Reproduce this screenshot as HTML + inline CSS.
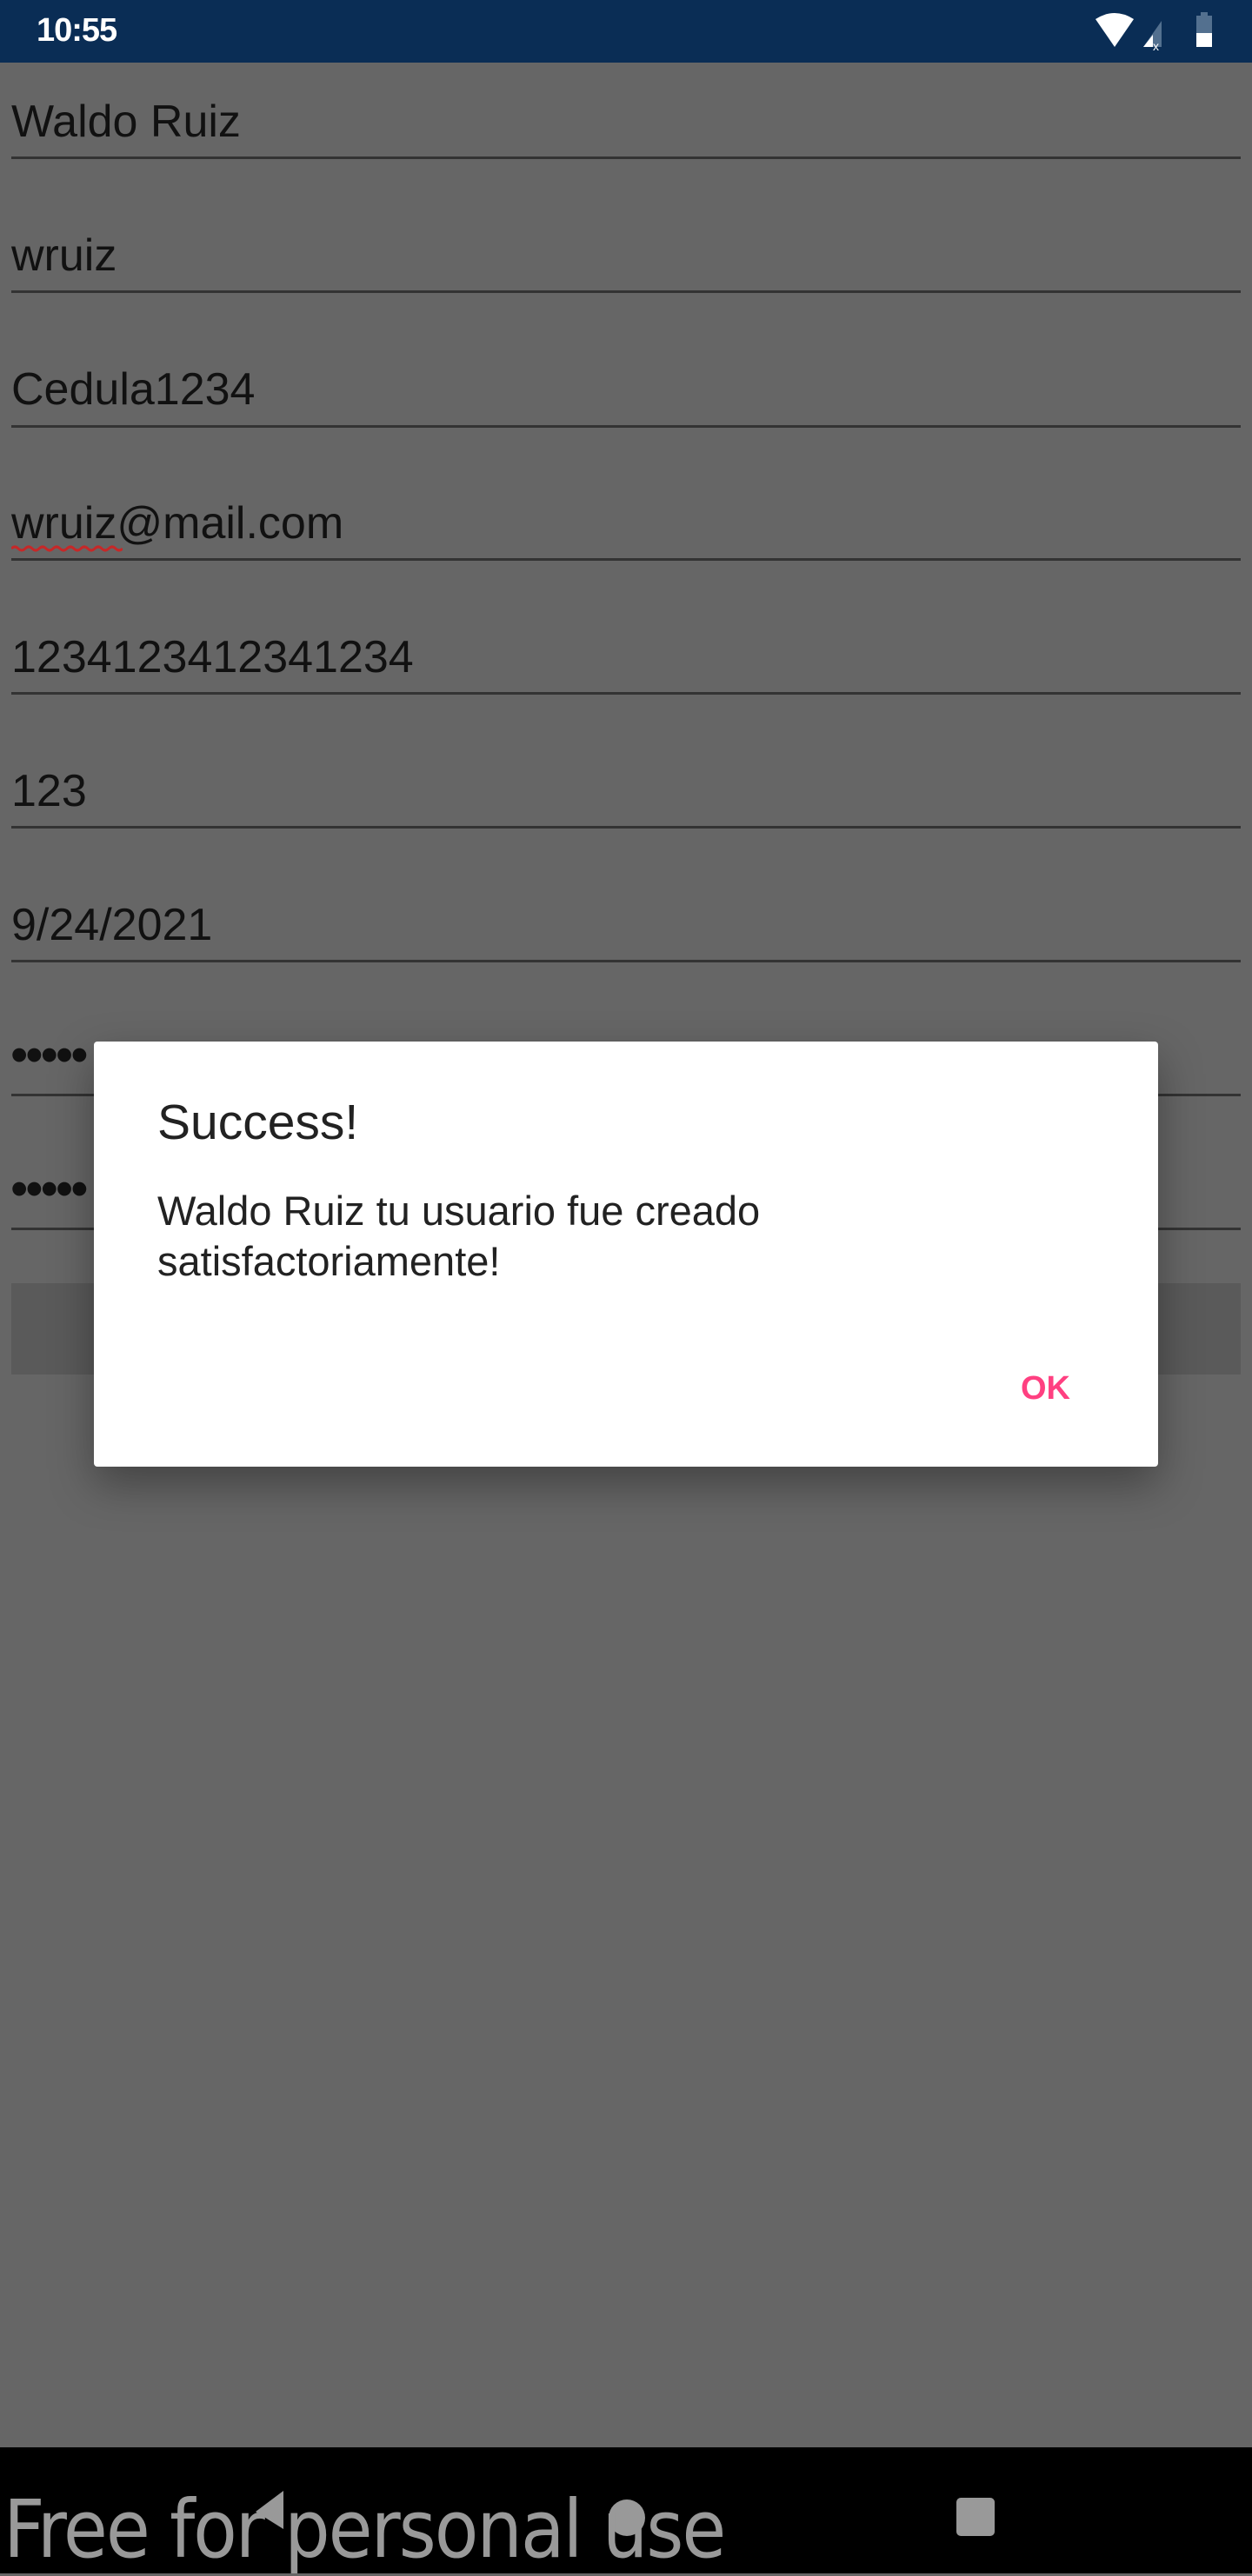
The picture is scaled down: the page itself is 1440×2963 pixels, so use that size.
<!DOCTYPE html>
<html><head><meta charset="utf-8"><style>
*{margin:0;padding:0;box-sizing:border-box}
body{width:1440px;height:2960px;background:#666;position:relative;overflow:hidden;font-family:"Liberation Sans",sans-serif}
.sb{position:absolute;left:0;top:0;width:1440px;height:72px;background:#0a2d55;color:#fff}
.time{position:absolute;left:42px;top:14px;font-size:38px;font-weight:bold;letter-spacing:-1px}
.f{position:absolute;left:13px;font-size:52px;color:#111}
.ln{position:absolute;left:13px;width:1414px;height:3px;background:#333}
.dots{position:absolute;left:12px;font-size:58px;color:#111;letter-spacing:-3px}
.btn{position:absolute;left:13px;top:1476px;width:1414px;height:105px;background:#5a5a5a}
.dlg{position:absolute;left:108px;top:1198px;width:1224px;height:489px;background:#fff;border-radius:4px;box-shadow:0 20px 50px rgba(0,0,0,.35)}
.t{position:absolute;left:73px;top:60px;font-size:57px;color:#222}
.b{position:absolute;left:73px;top:166px;font-size:47px;line-height:58px;color:#222;width:1100px}
.ok{position:absolute;left:1066px;top:378px;font-size:38px;font-weight:bold;color:#ff4081}
.nav{position:absolute;left:0;top:2815px;width:1440px;height:145px;background:#000}
.wm{position:absolute;left:4px;top:2856px;font-size:92px;color:#999;font-family:"DejaVu Sans Condensed","DejaVu Sans",sans-serif;letter-spacing:-2px;white-space:nowrap}
</style></head><body>
<div class="sb"><div class="time">10:55</div>
<svg style="position:absolute;left:1260px;top:14px" width="160" height="46" viewBox="0 0 160 46">
<path d="M0 8 Q22 -6 44 8 L22 40 Z" fill="#fff"/>
<path d="M55 40 L76 10 L76 40 Z" fill="#53708f"/><path d="M55 40 L66 26 L66 40 Z" fill="#fff"/>
<text x="66" y="44" font-size="14" fill="#fff" font-family="Liberation Sans">x</text>
<rect x="116" y="4" width="18" height="36" fill="#53708f"/><rect x="121" y="0" width="8" height="4" fill="#53708f"/><rect x="116" y="24" width="18" height="16" fill="#fff"/>
</svg></div>

<div class="f" style="top:110px">Waldo Ruiz</div><div class="ln" style="top:180px"></div>
<div class="f" style="top:264px">wruiz</div><div class="ln" style="top:334px"></div>
<div class="f" style="top:418px">Cedula1234</div><div class="ln" style="top:489px"></div>
<div class="f" style="top:572px">wruiz@mail.com</div>
<svg style="position:absolute;left:13px;top:627px" width="128" height="8"><path d="M0 4 Q4 0 8 4 T16 4 T24 4 T32 4 T40 4 T48 4 T56 4 T64 4 T72 4 T80 4 T88 4 T96 4 T104 4 T112 4 T120 4 T128 4" stroke="#c62828" stroke-width="3" fill="none"/></svg>
<div class="ln" style="top:642px"></div>
<div class="f" style="top:726px">1234123412341234</div><div class="ln" style="top:796px"></div>
<div class="f" style="top:880px">123</div><div class="ln" style="top:950px"></div>
<div class="f" style="top:1034px">9/24/2021</div><div class="ln" style="top:1104px"></div>
<div class="dots" style="top:1180px">•••••</div><div class="ln" style="top:1258px"></div>
<div class="dots" style="top:1334px">•••••</div><div class="ln" style="top:1412px"></div>
<div class="btn"></div>

<div class="dlg"><div class="t">Success!</div>
<div class="b">Waldo Ruiz tu usuario fue creado<br>satisfactoriamente!</div>
<div class="ok">OK</div></div>

<div class="nav">
<svg style="position:absolute;left:290px;top:50px" width="40" height="46"><path d="M36 0 L36 44 L4 24 Z" fill="#999"/></svg>
<div style="position:absolute;left:700px;top:60px;width:42px;height:42px;border-radius:50%;background:#999"></div>
<div style="position:absolute;left:1100px;top:58px;width:44px;height:44px;border-radius:5px;background:#999"></div>
</div>
<div class="wm">Free for personal use</div>
</body></html>
